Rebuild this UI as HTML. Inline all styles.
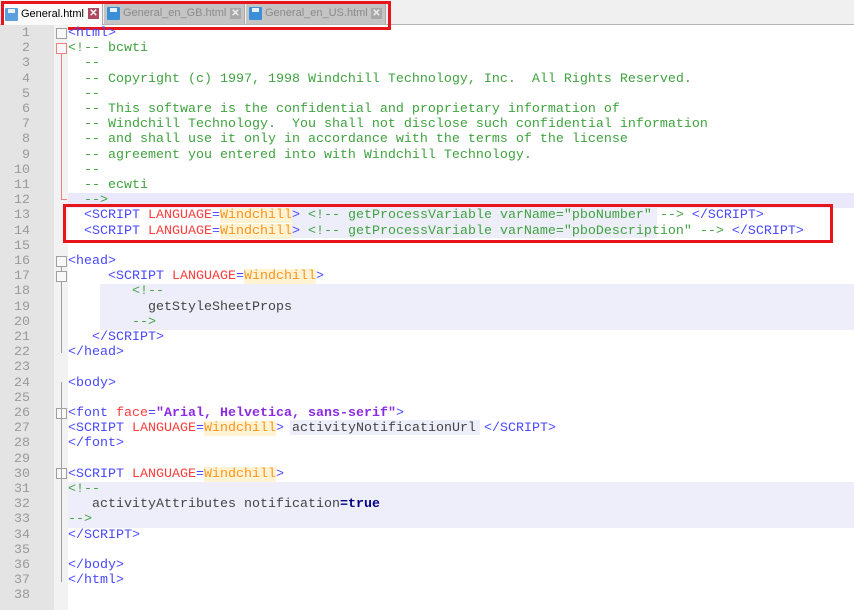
<!DOCTYPE html>
<html><head><meta charset="utf-8"><style>
body{margin:0;width:854px;height:610px;overflow:hidden;background:#fff;position:relative;font-family:"Liberation Mono",monospace;}
#tabs{position:absolute;left:0;top:0;width:854px;height:24px;background:#f0f0f0;border-bottom:1px solid #b4b4b4;}
.tab{position:absolute;top:3px;height:21px;font:11px "Liberation Sans",sans-serif;line-height:21px;color:#8a8a8a;background:#c4c4c4;border-right:1px solid #aaa;box-sizing:border-box;white-space:nowrap}
.tab.act{background:#fafafa;color:#000;top:2px;height:23px;line-height:23px;border-top:2px solid #f9a43a}
.ic{position:absolute;left:3px;top:4px;width:13px;height:13px;background:#3a8fd8;border-radius:1px}
.ic:after{content:"";position:absolute;left:3px;top:1px;width:7px;height:4px;background:#e8f0f8}
.act .ic{background:#5aa0dc}
.x{position:absolute;top:5px;width:11px;height:11px;background:#a8a8a8;color:#eee;font-size:10px;line-height:11px;text-align:center;font-weight:bold}
.act .x{background:#b04860;color:#fff}
#redtab{position:absolute;left:1px;top:1px;width:384px;height:23px;border:3px solid #e8141c;box-sizing:content-box}
#ln{position:absolute;left:0;top:25px;width:54px;height:585px;background:#e4e4e4}
#fm{position:absolute;left:54px;top:25px;width:14px;height:585px;background:#f2f2f2}
.l{position:absolute;left:68px;height:15.2px;line-height:15.2px;font-size:13.33px;white-space:pre;color:#444}
.n{position:absolute;left:0;width:30px;text-align:right;height:15.2px;line-height:15.2px;font-size:13.33px;color:#999}
.sh{position:absolute;background:#eeeefb}
.t{color:#4848ff}.a{color:#ff3c3c}.w{color:#ff9520;background:#fff3d4}.c{color:#3fa33f}.s{color:#8a2be2;font-weight:bold}.k{color:#000080;font-weight:bold}
.fb{position:absolute;left:56px;width:9px;height:9px;border:1px solid #a0a0a0;background:#f8f8f8}
.fv{position:absolute;left:61px;width:1px;background:#a0a0a0}
</style></head><body>
<div id="tabs">
 <div class="tab act" style="left:2px;width:101px"><span class="ic"></span><span style="position:absolute;left:19px;top:-1px">General.html</span><span class="x" style="left:86px;top:4px">✕</span></div>
 <div class="tab" style="left:104px;width:141px"><span class="ic"></span><span style="position:absolute;left:19px">General_en_GB.html</span><span class="x" style="left:126px">✕</span></div>
 <div class="tab" style="left:246px;width:140px"><span class="ic"></span><span style="position:absolute;left:19px">General_en_US.html</span><span class="x" style="left:125px">✕</span></div>
</div>
<div id="redtab"></div>
<div id="ln"></div><div id="fm"></div>
<div class="sh" style="left:68px;top:193px;width:786px;height:15px;background:#e9e9fb"></div>
<div class="sh" style="left:292px;top:208px;width:365px;height:30px"></div>
<div class="sh" style="left:100px;top:284px;width:754px;height:46px"></div>
<div class="sh" style="left:290px;top:420px;width:190px;height:15px"></div>
<div class="sh" style="left:68px;top:482px;width:786px;height:46px"></div>
<div class="fb" style="top:28px"></div>
<div class="fb" style="top:43px;border-color:#f08080"></div>
<div class="fv" style="top:54px;height:146px;background:#f08080"></div>
<div class="fv" style="top:199px;left:61px;width:6px;height:1px;background:#f08080"></div>
<div class="fb" style="top:256px"></div>
<div class="fv" style="top:267px;height:86px"></div>
<div class="fb" style="top:271px"></div>
<div class="fb" style="top:408px"></div>
<div class="fv" style="top:419px;height:24px"></div>
<div class="fb" style="top:468px"></div>
<div class="fv" style="top:479px;height:55px"></div>
<div class="fv" style="top:382px;height:200px"></div>
<div style="position:absolute;left:63px;top:204px;width:764px;height:33px;border:3px solid #e8141c"></div>
<div id="code"></div>
<script>
var L=[
'<span class="t">&lt;html&gt;</span>',
'<span class="c">&lt;!-- bcwti</span>',
'<span class="c">  --</span>',
'<span class="c">  -- Copyright (c) 1997, 1998 Windchill Technology, Inc.  All Rights Reserved.</span>',
'<span class="c">  --</span>',
'<span class="c">  -- This software is the confidential and proprietary information of</span>',
'<span class="c">  -- Windchill Technology.  You shall not disclose such confidential information</span>',
'<span class="c">  -- and shall use it only in accordance with the terms of the license</span>',
'<span class="c">  -- agreement you entered into with Windchill Technology.</span>',
'<span class="c">  --</span>',
'<span class="c">  -- ecwti</span>',
'<span class="c">  --&gt;</span>',
'  <span class="t">&lt;SCRIPT</span> <span class="a">LANGUAGE</span><span class="t">=</span><span class="w">Windchill</span><span class="t">&gt;</span> <span class="c">&lt;!-- getProcessVariable varName="pboNumber" --&gt;</span> <span class="t">&lt;/SCRIPT&gt;</span>',
'  <span class="t">&lt;SCRIPT</span> <span class="a">LANGUAGE</span><span class="t">=</span><span class="w">Windchill</span><span class="t">&gt;</span> <span class="c">&lt;!-- getProcessVariable varName="pboDescription" --&gt;</span> <span class="t">&lt;/SCRIPT&gt;</span>',
'',
'<span class="t">&lt;head&gt;</span>',
'     <span class="t">&lt;SCRIPT</span> <span class="a">LANGUAGE</span><span class="t">=</span><span class="w">Windchill</span><span class="t">&gt;</span>',
'        <span class="c">&lt;!--</span>',
'          getStyleSheetProps',
'        <span class="c">--&gt;</span>',
'   <span class="t">&lt;/SCRIPT&gt;</span>',
'<span class="t">&lt;/head&gt;</span>',
'',
'<span class="t">&lt;body&gt;</span>',
'',
'<span class="t">&lt;font</span> <span class="a">face</span><span class="t">=</span><span class="s">"Arial, Helvetica, sans-serif"</span><span class="t">&gt;</span>',
'<span class="t">&lt;SCRIPT</span> <span class="a">LANGUAGE</span><span class="t">=</span><span class="w">Windchill</span><span class="t">&gt;</span> activityNotificationUrl <span class="t">&lt;/SCRIPT&gt;</span>',
'<span class="t">&lt;/font&gt;</span>',
'',
'<span class="t">&lt;SCRIPT</span> <span class="a">LANGUAGE</span><span class="t">=</span><span class="w">Windchill</span><span class="t">&gt;</span>',
'<span class="c">&lt;!--</span>',
'   activityAttributes notification<span class="k">=true</span>',
'<span class="c">--&gt;</span>',
'<span class="t">&lt;/SCRIPT&gt;</span>',
'',
'<span class="t">&lt;/body&gt;</span>',
'<span class="t">&lt;/html&gt;</span>',
''];
var h='';
for(var i=0;i<L.length;i++){var yy=26+i*15.2;
h+='<div class="n" style="top:'+yy+'px">'+(i+1)+'</div><div class="l" style="top:'+yy+'px">'+L[i]+'</div>';}
document.getElementById('code').innerHTML=h;
</script>
</body></html>
